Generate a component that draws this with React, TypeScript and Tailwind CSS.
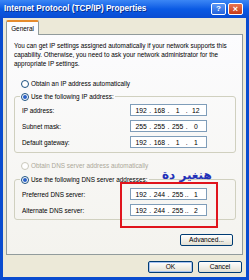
import React from "react";

const ui = { fontFamily: '"Liberation Sans", Arial, sans-serif' };

const Radio = ({ checked = false, disabled = false }: { checked?: boolean; disabled?: boolean }) => (
  <span
    className={`inline-flex w-[8px] h-[8px] rounded-full border items-center justify-center bg-white shrink-0 ${
      disabled ? "border-[#cac8bb]" : "border-[#1c5180]"
    }`}
  >
    {checked && <span className="w-[4px] h-[4px] rounded-full bg-[#2a61c9]" />}
  </span>
);

const IpBox = ({ parts, dots = [".", ".", "."] }: { parts: string[]; dots?: string[] }) => (
  <div className="w-[77px] h-[12px] bg-white border border-[#7f9db9] flex items-center px-[3px] text-[6.8px] text-black">
    {parts.map((p, i) => (
      <React.Fragment key={i}>
        <span className="flex-1 text-center">{p}</span>
        {i < 3 && <span className="w-[4px] text-center">{dots[i]}</span>}
      </React.Fragment>
    ))}
  </div>
);

const Row = ({ label, children }: { label: string; children: React.ReactNode }) => (
  <div className="flex items-center h-[12px] pl-[7px] pr-[28px]">
    <span className="flex-1">{label}</span>
    {children}
  </div>
);

const XpButton = ({ label, primary = false, w }: { label: string; primary?: boolean; w: string }) => (
  <button
    className={`${w} h-[12px] rounded-[2px] border border-[#003c74] bg-gradient-to-b from-white to-[#e3e0d3] text-[6.6px] text-black leading-none ${
      primary ? "shadow-[inset_0_0_0_1px_#a8c4f2]" : ""
    }`}
    style={ui}
  >
    {label}
  </button>
);

export default function App() {
  return (
    <div className="w-[249px] h-[280px] bg-[#0a4ccf] flex flex-col text-[6.4px] leading-[9px] text-black" style={ui}>
      {/* title bar */}
      <div className="h-[18px] shrink-0 flex items-center pl-[4px] pr-[6px] bg-gradient-to-b from-[#3b86f5] via-[#0a5ae4] to-[#0a4cd2]">
        <span className="flex-1 text-white font-bold text-[8.2px] leading-none [text-shadow:1px_1px_0_#0a2d8a]">
          Internet Protocol (TCP/IP) Properties
        </span>
        <div className="flex gap-[2px]">
          <span className="w-[15px] h-[12px] rounded-[2px] border border-white bg-gradient-to-b from-[#5c97f6] to-[#2462dc] text-white text-[8px] font-bold leading-[10px] text-center">
            ?
          </span>
          <span className="w-[15px] h-[12px] rounded-[2px] border border-white bg-gradient-to-b from-[#e8744f] to-[#c83a16] text-white text-[9px] font-bold leading-[10px] text-center">
            ×
          </span>
        </div>
      </div>

      {/* window body */}
      <div className="flex-1 mx-[3px] mb-[3px] bg-[#ece9d8] px-[3px] pt-[2px] flex flex-col">
        {/* tab */}
        <div className="flex">
          <div className="w-[33px] h-[15px] border border-b-0 border-[#919b9c] border-t-[2px] border-t-[#e68b2c] rounded-t-[2px] bg-[#fcfcfe] flex items-center justify-center relative z-10 -mb-[1px]">
            General
          </div>
        </div>

        {/* tab panel */}
        <div className="h-[221px] border border-[#919b9c] bg-gradient-to-b from-[#fcfcfe] to-[#f4f3ee] px-[7px] pt-[6px] relative">
          <p className="w-[215px]">
            You can get IP settings assigned automatically if your network supports this capability. Otherwise, you need to ask your network administrator for the appropriate IP settings.
          </p>

          <div className="flex items-center gap-[2px] mt-[11px] pl-[7px] h-[9px]">
            <Radio />
            <span>Obtain an IP address automatically</span>
          </div>

          <fieldset className="mt-[4px] border border-[#d0d0bf] rounded-[3px] w-[222px] pb-[4px]">
            <legend className="flex items-center gap-[2px] ml-[5px] px-[1px] h-[9px]">
              <Radio checked />
              <span>Use the following IP address:</span>
            </legend>
            <div className="flex flex-col gap-[4px] pt-[3px]">
              <Row label="IP address:">
                <IpBox parts={["192", "168", "1", "12"]} />
              </Row>
              <Row label="Subnet mask:">
                <IpBox parts={["255", "255", "255", "0"]} />
              </Row>
              <Row label="Default gateway:">
                <IpBox parts={["192", "168", "1", "1"]} />
              </Row>
            </div>
          </fieldset>

          <div className="flex items-center gap-[2px] mt-[8px] pl-[7px] h-[9px] text-[#aca899]">
            <Radio disabled />
            <span>Obtain DNS server address automatically</span>
          </div>

          <fieldset className="mt-[5px] border border-[#d0d0bf] rounded-[3px] w-[222px] pb-[3px]">
            <legend className="flex items-center gap-[2px] ml-[5px] px-[1px] h-[9px]">
              <Radio checked />
              <span>Use the following DNS server addresses:</span>
            </legend>
            <div className="flex flex-col gap-[4px] pt-[4px]">
              <Row label="Preferred DNS server:">
                <IpBox parts={["192", "244", "255", "1"]} dots={[".", ".", ".."]} />
              </Row>
              <Row label="Alternate DNS server:">
                <IpBox parts={["192", "244", "255", "2"]} dots={[".", ".", ".."]} />
              </Row>
            </div>
          </fieldset>

          <div className="flex justify-end mt-[14px] pr-[2px]">
            <XpButton label="Advanced..." w="w-[53px]" />
          </div>

          {/* annotation overlay */}
          <div className="absolute left-[113px] top-[147px] w-[98px] h-[46px] border-2 border-[#e0141c]" />
          <span
            className="absolute left-[155px] top-[134px] text-[12px] leading-none font-bold text-[#2231b8]"
            style={{ fontFamily: '"DejaVu Sans", sans-serif' }}
            dir="rtl"
          >
            هنغير دة
          </span>
        </div>

        {/* bottom buttons */}
        <div className="flex justify-end gap-[5px] mt-[6px] pr-[1px]">
          <XpButton label="OK" primary w="w-[45px]" />
          <XpButton label="Cancel" w="w-[44px]" />
        </div>
      </div>
    </div>
  );
}
